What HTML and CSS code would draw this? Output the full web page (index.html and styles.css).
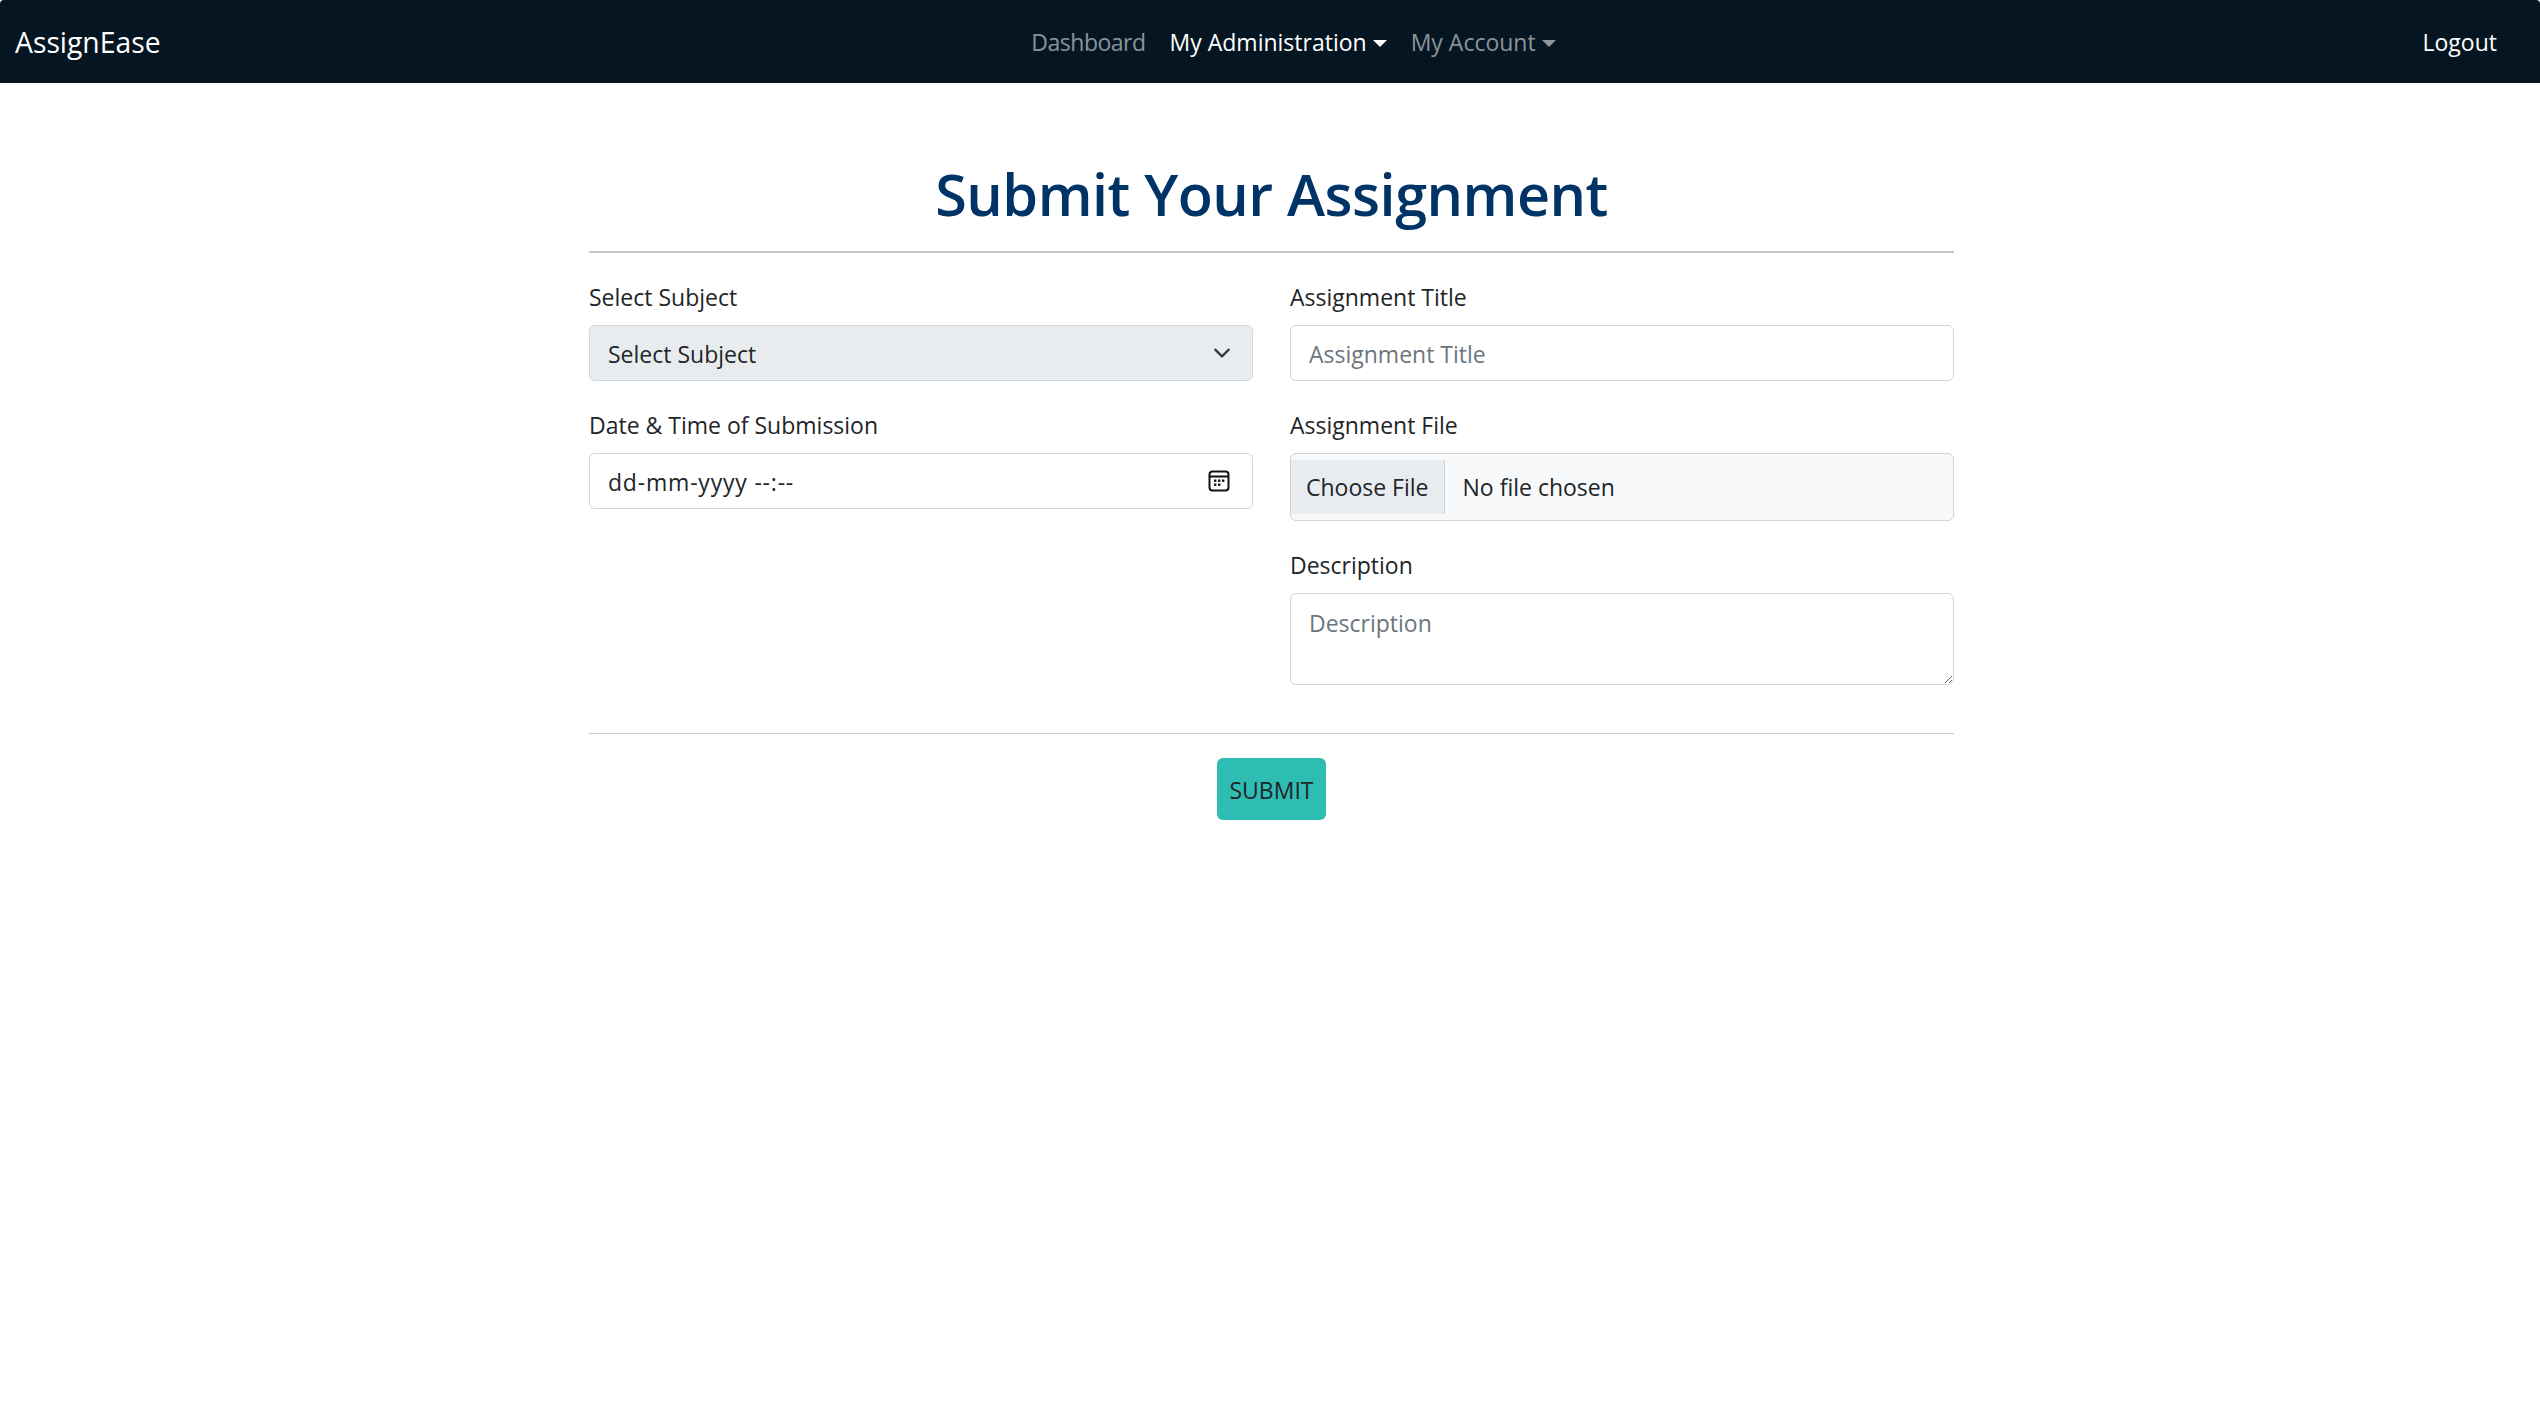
FILE: index.html
```html
<!DOCTYPE html>
<html lang="en">
  <head>
    <meta charset="UTF-8" />
    <title>AssignEase</title>
    <link rel="stylesheet" href="styles.css">
  </head>
  <body>
    <nav class="navbar">
      <a class="brand" href="#">AssignEase</a>
      <ul class="nav-links">
        <li><a class="nav-link nav-dashboard" href="#">Dashboard</a></li>
        <li><a class="nav-link active dropdown" href="#">My Administration</a></li>
        <li><a class="nav-link dropdown" href="#">My Account</a></li>
      </ul>
      <a class="nav-link active" href="#">Logout</a>
    </nav>

    <main class="page">
      <h1>Submit Your Assignment</h1>
      <hr class="rule" />
      <form class="assignment-form">
        <div class="col">
          <div class="field">
            <label for="subject">Select Subject</label>
            <select id="subject" class="form-select">
              <option>Select Subject</option>
            </select>
          </div>
          <div class="field">
            <label>Date &amp; Time of Submission</label>
            <div class="form-control date-input">
              <span>dd-mm-yyyy --:--</span>
              <svg width="22" height="22" viewBox="0 0 22 22" fill="none" stroke="#111" stroke-width="2">
                <rect x="1.5" y="1.5" width="19" height="19" rx="3" />
                <path d="M1.5 6.5h19" />
                <g fill="#111" stroke="none">
                  <rect x="6" y="9.5" width="2.4" height="2.4" />
                  <rect x="10" y="9.5" width="2.4" height="2.4" />
                  <rect x="14" y="9.5" width="2.4" height="2.4" />
                  <rect x="6" y="13.5" width="2.4" height="2.4" />
                  <rect x="10" y="13.5" width="2.4" height="2.4" />
                </g>
              </svg>
            </div>
          </div>
        </div>
        <div class="col">
          <div class="field">
            <label for="title">Assignment Title</label>
            <input id="title" class="form-control" type="text" placeholder="Assignment Title" />
          </div>
          <div class="field">
            <label for="file">Assignment File</label>
            <input id="file" class="form-control file-input" type="file" />
          </div>
          <div class="field">
            <label for="description">Description</label>
            <textarea id="description" class="form-control" placeholder="Description"></textarea>
          </div>
        </div>
      </form>
      <hr class="rule rule-bottom" />
      <div class="actions">
        <button class="submit-btn" type="button">SUBMIT</button>
      </div>
    </main>
  </body>
</html>
```

FILE: styles.css
```css
* {
  box-sizing: border-box;
}
body {
  margin: 0;
  background: #fff;
  color: #212529;
  font-family: "Open Sans", sans-serif;
  font-size: 23px;
}
.navbar {
  display: flex;
  align-items: center;
  height: 83px;
  padding: 0 31px 0 15px;
  background: #051622;
  border-top-left-radius: 4px;
  border-top-right-radius: 4px;
}
.brand {
  margin-right: 16px;
  color: #fff;
  font-size: 28.3px;
  text-decoration: none;
}
.nav-links {
  display: flex;
  margin: 0 auto;
  padding: 0;
  list-style: none;
}
.nav-link {
  display: block;
  padding: 12px;
  color: rgba(255, 255, 255, 0.55);
  text-decoration: none;
}
.nav-link.active {
  color: #fff;
}
.nav-dashboard {
  letter-spacing: -0.5px;
}
.dropdown::after {
  content: "";
  display: inline-block;
  margin-left: 6px;
  vertical-align: 4px;
  border-top: 7px solid;
  border-left: 7px solid transparent;
  border-right: 7px solid transparent;
}
.page {
  width: 1365px;
  margin: 0 0 0 589px;
  padding-top: 75px;
}
h1 {
  margin: 0;
  color: #003366;
  font-size: 57.5px;
  font-weight: 600;
  letter-spacing: -0.5px;
  line-height: 72px;
  text-align: center;
}
.rule {
  height: 2px;
  margin: 21px 0 0;
  border: 0;
  background: #c8c8c8;
}
.assignment-form {
  display: grid;
  grid-template-columns: 1fr 1fr;
  column-gap: 37px;
  padding: 26px 0 22px;
}
.field {
  margin-bottom: 26px;
}
label {
  display: block;
  height: 36px;
  margin-bottom: 10px;
  line-height: 36px;
}
.form-control,
.form-select {
  display: block;
  width: 100%;
  height: 56px;
  padding: 2px 18px 0;
  border: 1.5px solid #ced4da;
  border-radius: 6px;
  background: #fff;
  color: #212529;
  font: inherit;
}
.form-control::placeholder {
  color: #6c757d;
  opacity: 1;
}
.form-select {
  appearance: none;
  background: #e9ecef url("data:image/svg+xml,%3csvg xmlns='http://www.w3.org/2000/svg' viewBox='0 0 16 16'%3e%3cpath fill='none' stroke='%23343a40' stroke-linecap='round' stroke-linejoin='round' stroke-width='2' d='m2 5 6 6 6-6'/%3e%3c/svg%3e") no-repeat right 18px center / 24px 18px;
}
.date-input {
  display: flex;
  align-items: center;
  justify-content: space-between;
  padding-right: 22px;
  letter-spacing: 0.8px;
}
.date-input svg {
  margin-top: -2px;
}
.file-input {
  height: 68px;
  padding: 6px 0;
  background: #f8f9fa;
  line-height: 54px;
}
.file-input::file-selector-button {
  height: 54px;
  margin: 0 18px 0 0;
  padding: 0 15px;
  border: 0;
  border-right: 1.5px solid #ced4da;
  background: #e9ecef;
  color: #212529;
  font: inherit;
}
textarea.form-control {
  height: 92px;
  padding-top: 13px;
  resize: vertical;
}
.rule-bottom {
  height: 1px;
  margin-top: 0;
}
.actions {
  display: flex;
  justify-content: center;
  padding-top: 24px;
}
.submit-btn {
  width: 109px;
  height: 62px;
  padding-top: 2px;
  border: 0;
  border-radius: 6px;
  background: #2ebdb3;
  color: #212529;
  font: inherit;
}
```
